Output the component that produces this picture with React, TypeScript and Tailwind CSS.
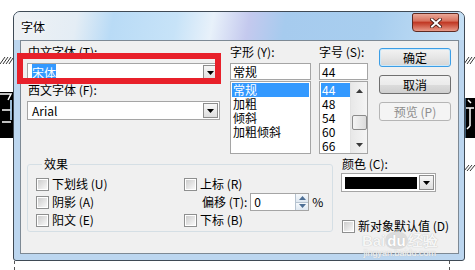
import React from 'react';

const cjk = "font-['Noto_Sans_CJK_SC','Noto_Sans',sans-serif]";

function DropBtn() {
  return (
    <div className="flex h-[15px] w-[15px] shrink-0 items-center justify-center border border-[#8d8d8d] bg-[linear-gradient(#f7f7f7,#dedede)]">
      <svg width="7" height="4" viewBox="0 0 7 4">
        <path d="M0 0h7L3.5 4z" fill="#000" />
      </svg>
    </div>
  );
}

function Combo({ children }: { children: React.ReactNode }) {
  return (
    <div className="flex h-[19px] items-center border border-[#a5a5a5] bg-white pl-[4px] pr-[1px]">
      <div className="flex-1">{children}</div>
      <DropBtn />
    </div>
  );
}

function Check({ label }: { label: string }) {
  return (
    <div className="flex items-center">
      <div className="h-[13px] w-[13px] shrink-0 border border-[#8e8f8f] bg-white p-[1px]">
        <div className="h-full w-full bg-[linear-gradient(135deg,#cdcdcd,#f8f8f8)]" />
      </div>
      <span className="ml-[3px] whitespace-nowrap">{label}</span>
    </div>
  );
}

function Button({ label, variant }: { label: string; variant?: 'default' | 'disabled' }) {
  if (variant === 'default') {
    return (
      <div className="flex h-[19px] items-center justify-center rounded-[3px] border border-[#3c9ee6] bg-[linear-gradient(#f3f3f3,#e6e6e6_50%,#d6d6d6)] shadow-[inset_0_0_0_1px_#cbe9fb]">
        {label}
      </div>
    );
  }
  if (variant === 'disabled') {
    return (
      <div className="flex h-[19px] items-center justify-center rounded-[3px] border border-[#b5b5b5] bg-[#f4f4f4] text-[#8d8d8d]">
        {label}
      </div>
    );
  }
  return (
    <div className="flex h-[19px] items-center justify-center rounded-[3px] border border-[#707070] bg-[linear-gradient(#f2f2f2,#ebebeb_50%,#dcdcdc_51%,#cfcfcf)]">
      {label}
    </div>
  );
}

function Scrollbar() {
  return (
    <div className="flex w-[17px] flex-col items-center border-l border-[#e2e2e2] bg-[linear-gradient(90deg,#e8e8e8,#f5f5f5)]">
      <div className="flex h-[17px] w-full items-center justify-center">
        <svg width="7" height="4" viewBox="0 0 7 4">
          <path d="M0 4h7L3.5 0z" fill="#3a3a3a" />
        </svg>
      </div>
      <div className="mt-[16px] h-[15px] w-[15px] rounded-[2px] border border-[#8b8b8b] bg-[linear-gradient(90deg,#f4f4f4,#dcdcdc)]" />
      <div className="flex-1" />
      <div className="flex h-[17px] w-full items-center justify-center">
        <svg width="7" height="4" viewBox="0 0 7 4">
          <path d="M0 0h7L3.5 4z" fill="#3a3a3a" />
        </svg>
      </div>
    </div>
  );
}

function Spinner() {
  return (
    <div className="flex h-full w-[13px] flex-col border-l border-[#b6c3d0]">
      <div className="flex flex-1 items-center justify-center bg-[linear-gradient(#f6f9fc,#dfe8f1)]">
        <svg width="7" height="4" viewBox="0 0 7 4">
          <path d="M0 4h7L3.5 0z" fill="#4d6f95" />
        </svg>
      </div>
      <div className="h-px bg-[#b6c3d0]" />
      <div className="flex flex-1 items-center justify-center bg-[linear-gradient(#f6f9fc,#dfe8f1)]">
        <svg width="7" height="4" viewBox="0 0 7 4">
          <path d="M0 0h7L3.5 4z" fill="#4d6f95" />
        </svg>
      </div>
    </div>
  );
}

export default function App() {
  const styles = ['常规', '加粗', '倾斜', '加粗倾斜'];
  const sizes = ['44', '48', '54', '60', '66'];

  return (
    <div className={`relative h-[270px] w-[475px] overflow-hidden bg-white text-[12px] leading-[14px] text-black ${cjk}`}>
      {/* bits of the document behind the dialog */}
      <svg className="absolute left-0 top-[57px]" width="13" height="7" viewBox="0 0 13 7">
        <path d="M0 7L5 0M3 7L8 0M6 7L11 0M9 7L13 1" stroke="#333" strokeWidth="1" />
      </svg>
      <svg className="absolute left-0 top-[92px]" width="13" height="46" viewBox="0 0 13 46">
        <rect width="13" height="46" fill="#000" />
        <path d="M0 2h11l-3 6M11 8v20M2 18h9M2 30h9" stroke="#fff" strokeWidth="1.5" fill="none" />
        <path d="M11 8v20" stroke="#7ab6e8" strokeWidth="1" />
      </svg>
      <svg className="absolute right-0 top-[57px]" width="11" height="7" viewBox="0 0 11 7">
        <path d="M0 7L5 0M3 7L8 0M6 7L11 0" stroke="#333" strokeWidth="1" />
      </svg>
      <svg className="absolute right-0 top-[98px]" width="10" height="40" viewBox="0 0 10 40">
        <rect width="10" height="40" fill="#000" />
        <path d="M3 2l3 3M1 10h8M5 10v18M5 28l-3 3" stroke="#fff" strokeWidth="1.5" fill="none" />
        <path d="M0 0v40" stroke="#7ab6e8" strokeWidth="1" />
      </svg>
      <svg className="absolute right-0 top-[165px]" width="11" height="6" viewBox="0 0 11 6">
        <path d="M0 6L5 0M3 6L8 0M6 6L11 0" stroke="#333" strokeWidth="1" />
      </svg>
      <div className="absolute left-[14px] top-[261px] h-[9px] border-l border-dashed border-[#555]" />
      <div className="absolute left-[449px] top-[261px] h-[9px] border-l border-dashed border-[#555]" />

      {/* dialog window */}
      <div className="absolute left-[13px] top-[11px] flex h-[250px] w-[452px] flex-col overflow-hidden rounded-t-[7px] rounded-b-[3px] border border-[#3f4a55] bg-[#bcd6ef]">
        <div className="flex h-[28px] shrink-0 items-start bg-[linear-gradient(100deg,#eef1f4_0%,#e4edf5_14%,#b9dbf6_22%,#c7e3f8_36%,#e8f1fa_44%,#c4c9ee_52%,#a6cbee_60%,#a8ceef_80%,#c6e0f5_100%)]">
          <div className="mt-[8px] pl-[7px] [text-shadow:0_0_4px_#fff,0_0_6px_#fff]">字体</div>
          <div className="flex-1" />
          <div className="mr-[5px] mt-px flex h-[19px] w-[47px] items-center justify-center rounded-b-[4px] rounded-t-[2px] border border-[#5e2a22] bg-[linear-gradient(#eaa898,#d8735f_40%,#c13a26_50%,#cc5440_65%,#e89b8a)]">
            <svg width="12" height="10" viewBox="0 0 12 10">
              <path d="M2 1.5l8 7M10 1.5l-8 7" stroke="#3a1510" strokeWidth="3.6" strokeLinecap="square" />
              <path d="M2 1.5l8 7M10 1.5l-8 7" stroke="#fff" strokeWidth="2" strokeLinecap="square" />
            </svg>
          </div>
        </div>

        <div className="mb-[6px] ml-[6px] mr-[5px] flex flex-1 flex-col border border-[#7d8994] bg-[#f0f0f0] pl-[6px] pt-[4px]">
          {/* top section */}
          <div className="flex">
            <div className="flex w-[193px] flex-col">
              <div className="pl-px">中文字体 (T):</div>
              <div className="mt-[4px]">
                <Combo>
                  <span className="bg-[#3399ff] px-0 text-white">宋体</span>
                </Combo>
              </div>
              <div className="mt-[1px] pl-px">西文字体 (F):</div>
              <div className="mt-[4px]">
                <Combo>Arial</Combo>
              </div>
            </div>

            <div className="ml-[10px] flex w-[81px] flex-col">
              <div>字形 (Y):</div>
              <div className="mt-[4px] h-[17px] border border-[#a5a5a5] bg-white pl-[2px] leading-[15px]">常规</div>
              <div className="mt-px h-[73px] border border-[#a5a5a5] bg-white p-px">
                {styles.map((s, i) => (
                  <div key={s} className={i === 0 ? 'bg-[#3399ff] pl-px text-white' : 'pl-px'}>
                    {s}
                  </div>
                ))}
              </div>
            </div>

            <div className="ml-[8px] flex w-[49px] flex-col">
              <div>字号 (S):</div>
              <div className="mt-[4px] h-[17px] border border-[#a5a5a5] bg-white pl-[2px] leading-[15px]">44</div>
              <div className="mt-px flex h-[73px] border border-[#a5a5a5] bg-white">
                <div className="flex-1 pl-px pt-px">
                  {sizes.map((s, i) => (
                    <div key={s} className={i === 0 ? 'bg-[#3399ff] pl-px text-white' : 'pl-px'}>
                      {s}
                    </div>
                  ))}
                </div>
                <Scrollbar />
              </div>
            </div>

            <div className="ml-[11px] mt-[3px] flex w-[72px] flex-col gap-[8px]">
              <Button label="确定" variant="default" />
              <Button label="取消" />
              <Button label="预览 (P)" variant="disabled" />
            </div>
          </div>

          {/* bottom section */}
          <div className="mt-[3px] flex">
            <fieldset className="h-[75px] w-[306px] rounded-[3px] border border-[#d5dfe5] pl-[8px] pt-[4px]">
              <legend className="ml-[6px] px-[2px]">效果</legend>
              <div className="grid grid-cols-[148px_1fr]">
                <div className="flex h-[18px] items-center"><Check label="下划线 (U)" /></div>
                <div className="flex h-[18px] items-center"><Check label="上标 (R)" /></div>
                <div className="flex h-[18px] items-center"><Check label="阴影 (A)" /></div>
                <div className="flex h-[18px] items-center">
                  <span className="ml-[18px] whitespace-nowrap">偏移 (T):</span>
                  <div className="ml-[3px] flex h-[18px] w-[59px] items-center border border-[#a5a5a5] bg-white">
                    <span className="flex-1 pl-[3px]">0</span>
                    <Spinner />
                  </div>
                  <span className="ml-[3px]">%</span>
                </div>
                <div className="flex h-[18px] items-center"><Check label="阳文 (E)" /></div>
                <div className="flex h-[18px] items-center"><Check label="下标 (B)" /></div>
              </div>
            </fieldset>

            <div className="ml-[8px] flex w-[95px] flex-col">
              <div className="pl-px">颜色 (C):</div>
              <div className="mt-[2px] flex h-[19px] items-center border border-[#a5a5a5] bg-white pl-[3px] pr-px">
                <div className="h-[12px] flex-1 bg-black" />
                <div className="ml-[2px]"><DropBtn /></div>
              </div>
              <div className="ml-px mt-[27px]"><Check label="新对象默认值 (D)" /></div>
            </div>
          </div>
        </div>
      </div>

      {/* watermark */}
      <div className="pointer-events-none absolute left-[362px] top-[233px] flex flex-col items-center text-[#f6f6f6] [text-shadow:0_0_1px_#b0b0b0]">
        <div className="font-['Liberation_Sans',sans-serif] text-[15px] font-bold leading-[15px]">Bai<span className="rounded-full bg-[#dcdcdc] px-[2px] text-white">du</span>经验</div>
        <div className="font-['Liberation_Sans',sans-serif] text-[9px] leading-[11px]">jingyan.baidu.com</div>
      </div>

      {/* annotation */}
      <div className="pointer-events-none absolute left-[17px] top-[53px] h-[31px] w-[204px] border-[6px] border-[#e8202a]" />
    </div>
  );
}
